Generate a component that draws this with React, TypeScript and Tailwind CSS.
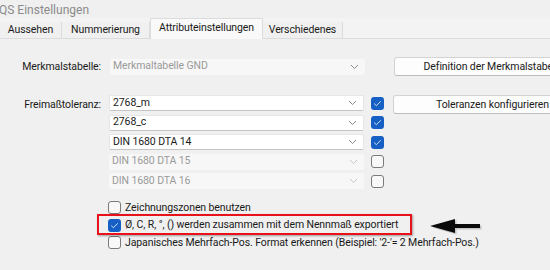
const font = { fontFamily: 'Roboto, "Liberation Sans", sans-serif' };

const Chevron = ({ dim }: { dim?: boolean }) => (
  <svg width="9" height="6" viewBox="0 0 9 6" className="shrink-0">
    <path d="M1 1l3.5 3.5L8 1" fill="none" stroke={dim ? "#c8c8c8" : "#8a8a8a"} strokeWidth="1" />
  </svg>
);

const Combo = ({ value, disabled, enabled }: { value: string; disabled?: boolean; enabled?: boolean }) => (
  <div
    className={
      "flex h-[16px] w-[255px] shrink-0 items-center justify-between rounded-[2px] pl-[3px] pr-[6px] " +
      (enabled
        ? "bg-white border border-[#e6e6e6] border-b-[#c4c4c4] text-[#1a1a1a]"
        : "bg-[#f7f7f7] text-[#9a9a9a]")
    }
  >
    <span className="text-[10.5px] leading-none tracking-[-0.1px]">{value}</span>
    <Chevron dim={disabled} />
  </div>
);

const Check = ({ checked }: { checked?: boolean }) =>
  checked ? (
    <div className="flex h-[13px] w-[13px] shrink-0 items-center justify-center rounded-[3px] bg-[#1660c5]">
      <svg width="9" height="7" viewBox="0 0 9 7">
        <path d="M1.2 3.6l2.2 2.1L7.8 1.3" fill="none" stroke="#cfe0f7" strokeWidth="1" />
      </svg>
    </div>
  ) : (
    <div className="h-[13px] w-[13px] shrink-0 rounded-[3px] border border-[#7a7a7a] bg-[#f8f8f8]" />
  );

const Btn = ({ children }: { children: string }) => (
  <div className="flex h-[19px] w-[199px] shrink-0 items-center justify-center rounded-[3px] border border-[#d3d3d3] border-b-[#bdbdbd] bg-[#fdfdfd] text-[10.5px] tracking-[-0.1px] text-[#1a1a1a] whitespace-nowrap">
    {children}
  </div>
);

const tabs = ["Aussehen", "Nummerierung", "Attributeinstellungen", "Verschiedenes"];
const tabW = ["w-[62px]", "w-[88px]", "w-[113px]", "w-[80px]"];

export default function App() {
  return (
    <div style={font} className="relative h-[270px] w-[550px] overflow-hidden bg-[#f0f0f0] text-[#1a1a1a]">
      {/* title */}
      <div className="h-[18px] pt-[4px] ml-[-1px] text-[12px] leading-none text-[#8a8a8a]">QS Einstellungen</div>

      {/* tabs */}
      <div className="flex h-[21px] items-end bg-[#f3f3f3] text-[10.5px] tracking-[-0.1px]">
        {tabs.map((t, i) =>
          i === 2 ? (
            <div
              key={t}
              className={tabW[i] + " flex h-[21px] shrink-0 items-center justify-center bg-[#f9f9f9] border-x border-t border-[#dcdcdc] pb-[2px]"}
            >
              {t}
            </div>
          ) : (
            <div
              key={t}
              className={tabW[i] + " flex h-[17px] shrink-0 items-center justify-center border-r border-b border-[#dcdcdc] bg-[#f0f0f0]"}
            >
              {t}
            </div>
          )
        )}
        <div className="flex-1 h-[17px] border-b border-[#dcdcdc]" />
      </div>

      {/* content */}
      <div className="flex flex-col pt-[18px] text-[10.5px] tracking-[-0.1px]">
        <div className="flex items-center h-[19px]">
          <div className="w-[101px] shrink-0 text-right">Merkmalstabelle:</div>
          <div className="ml-[9px] shrink-0">
            <Combo value="Merkmaltabelle GND" />
          </div>
          <div className="ml-[29px] shrink-0">
            <Btn>Definition der Merkmalstabelle</Btn>
          </div>
        </div>

        <div className="flex mt-[19px]">
          <div className="w-[101px] shrink-0 text-right pt-[2px]">Freimaßtoleranz:</div>
          <div className="ml-[8px] flex shrink-0 flex-col gap-[3.5px]">
            {[
              { v: "2768_m", c: true, e: true },
              { v: "2768_c", c: true, e: true },
              { v: "DIN 1680 DTA 14", c: true, e: true },
              { v: "DIN 1680 DTA 15", c: false, e: false },
              { v: "DIN 1680 DTA 16", c: false, e: false },
            ].map((r) => (
              <div key={r.v} className="flex items-center gap-[7px]">
                <Combo value={r.v} enabled={r.e} disabled={!r.e} />
                <Check checked={r.c} />
              </div>
            ))}
          </div>
          <div className="ml-[9px] shrink-0">
            <Btn>Toleranzen konfigurieren</Btn>
          </div>
        </div>

        <div className="flex flex-col ml-[108px] mt-[12px] gap-[4.5px] whitespace-nowrap">
          <div className="flex items-center gap-[4px] h-[13px]">
            <Check />
            <span>Zeichnungszonen benutzen</span>
          </div>
          <div className="flex items-center gap-[4px] h-[13px]">
            <Check checked />
            <span>Ø, C, R, °, () werden zusammen mit dem Nennmaß exportiert</span>
          </div>
          <div className="flex items-center gap-[4px] h-[13px]">
            <Check />
            <span>Japanisches Mehrfach-Pos. Format erkennen (Beispiel: '2-'= 2 Mehrfach-Pos.)</span>
          </div>
        </div>
      </div>

      {/* annotation */}
      <div className="absolute left-[97px] top-[214px] h-[21px] w-[315px] border-2 border-[#e8121b] shadow-[1px_1px_2px_rgba(0,0,0,0.35)]" />
      <svg className="absolute left-[428px] top-[216px]" width="58" height="20" viewBox="0 0 58 20">
        <path d="M3 10 L27 3 L27 8 L52 8 L52 12 L27 12 L27 17 Z" fill="#9a9a9a" opacity="0.5" transform="translate(1.5 1.5)" />
        <path d="M2 10 L27 3 L27 8 L52 8 L52 12 L27 12 L27 17 Z" fill="#0a0a0a" />
      </svg>
    </div>
  );
}
